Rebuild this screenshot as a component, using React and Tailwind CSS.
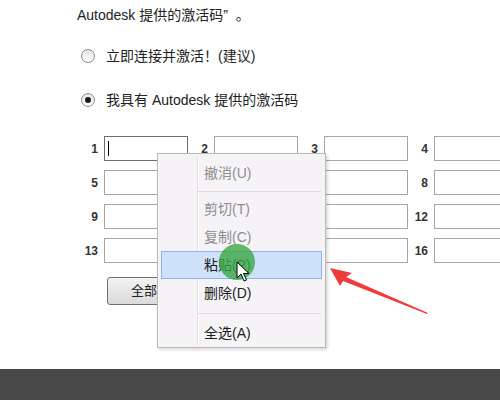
import React from "react";

const font = { fontFamily: '"Liberation Sans", "Noto Sans CJK SC", sans-serif' };

// labels that sit under the context menu in the screenshot
const covered = ["6", "7", "10", "11", "14", "15"];

function Radio({ checked }) {
    return (
        <span className="ml-[4px] flex h-[14px] w-[14px] items-center justify-center rounded-full border border-[#8c8c8c] bg-gradient-to-b from-[#e6e6e6] to-white">
            {checked && <span className="h-[6px] w-[6px] rounded-full bg-[#1a1a1a]" />}
        </span>
    );
}

function Cell({ label, first }) {
    return (
        <div className="flex items-center">
            <span
                className={
                    "w-[21px] pr-[1px] text-right text-[12px] font-bold text-[#333] " +
                    (covered.includes(label) ? "invisible" : "")
                }
            >
                {label}
            </span>
            <div
                className={
                    "ml-[5px] flex h-[25px] w-[84px] shrink-0 items-center border bg-white " +
                    (first ? "border-[#6e6e6e]" : "border-[#a6a6a6]")
                }
            >
                {first && <span className="ml-[3px] h-[15px] w-[1px] bg-black" />}
            </div>
        </div>
    );
}

function MenuItem({ text, disabled, active }) {
    return (
        <div
            className={
                "mx-[3px] flex h-[28px] items-center border pl-[42px] text-[14px] " +
                (active ? "border-[#86b6ea] bg-[#cde2f8] " : "border-transparent ") +
                (disabled ? "text-[#8e8e8e]" : "text-[#1c1c1c]")
            }
        >
            {text}
        </div>
    );
}

function Separator({ h }) {
    return (
        <div className={"flex items-center pl-[40px] pr-[4px] " + h}>
            <div className="h-[1px] w-full bg-[#dedbe0]" />
        </div>
    );
}

export default function App() {
    const rows = [
        ["1", "2", "3", "4"],
        ["5", "6", "7", "8"],
        ["9", "10", "11", "12"],
        ["13", "14", "15", "16"],
    ];

    return (
        <div className="relative flex h-[400px] w-[500px] flex-col overflow-hidden bg-white text-[#222]" style={font}>
            <div className="h-[369px] pl-[77px] pt-[5px]">
                <p className="h-[20px] text-[14px] leading-[20px]">Autodesk 提供的激活码”&nbsp;&nbsp;。</p>

                <div className="mt-[21px] flex h-[20px] items-center gap-[11px] text-[14px]">
                    <Radio />
                    <span>立即连接并激活！(建议)</span>
                </div>

                <div className="mt-[24px] flex h-[20px] items-center gap-[11px] text-[14px]">
                    <Radio checked />
                    <span>我具有 Autodesk 提供的激活码</span>
                </div>

                <div className="mt-[26px] ml-[1px] flex flex-col gap-y-[9px]">
                    {rows.map((row, i) => (
                        <div key={i} className="flex">
                            {row.map((n) => (
                                <Cell key={n} label={n} first={n === "1"} />
                            ))}
                        </div>
                    ))}
                </div>

                <button className="mt-[14px] ml-[30px] h-[28px] w-[100px] rounded-[3px] border border-[#707070] bg-gradient-to-b from-[#f3f3f3] to-[#dadada] text-[13px] text-[#222]">
                    全部清除
                </button>
            </div>

            <div className="h-[31px] bg-[#484848]" />

            {/* context menu */}
            <div className="absolute left-[157px] top-[153px] h-[195px] w-[169px] border border-[#b9b9b9] bg-[#f5f3f6] pt-[5px] shadow-[2px_2px_3px_rgba(0,0,0,0.15)]">
                <div className="absolute left-[39px] top-[2px] bottom-[2px] w-[1px] bg-[#e2dfe4]" />
                <div className="absolute left-[40px] top-[2px] bottom-[2px] w-[1px] bg-white" />
                <div className="relative">
                    <MenuItem text="撤消(U)" disabled />
                    <Separator h="h-[8px]" />
                    <MenuItem text="剪切(T)" disabled />
                    <MenuItem text="复制(C)" disabled />
                    <MenuItem text="粘贴(P)" active />
                    <MenuItem text="删除(D)" />
                    <Separator h="h-[12px]" />
                    <MenuItem text="全选(A)" />
                </div>
            </div>

            {/* click marker */}
            <div className="absolute left-[219px] top-[244px] h-[36px] w-[36px] rounded-full bg-[#3aa844]/80" />

            {/* mouse cursor */}
            <svg className="absolute left-[236px] top-[261px]" width="14" height="22" viewBox="0 0 14 22">
                <path d="M1 1 L1 17 L5 13 L8 20 L10.5 19 L7.5 12.5 L13 12.5 Z" fill="white" stroke="black" strokeWidth="1" strokeLinejoin="round" />
            </svg>

            {/* red arrow */}
            <svg className="absolute left-[325px] top-[262px]" width="110" height="56" viewBox="0 0 110 56">
                <polygon points="5,6 27,11 21,15 103,51 102,52 18,19 15,24" fill="#f03b3b" />
            </svg>
        </div>
    );
}
